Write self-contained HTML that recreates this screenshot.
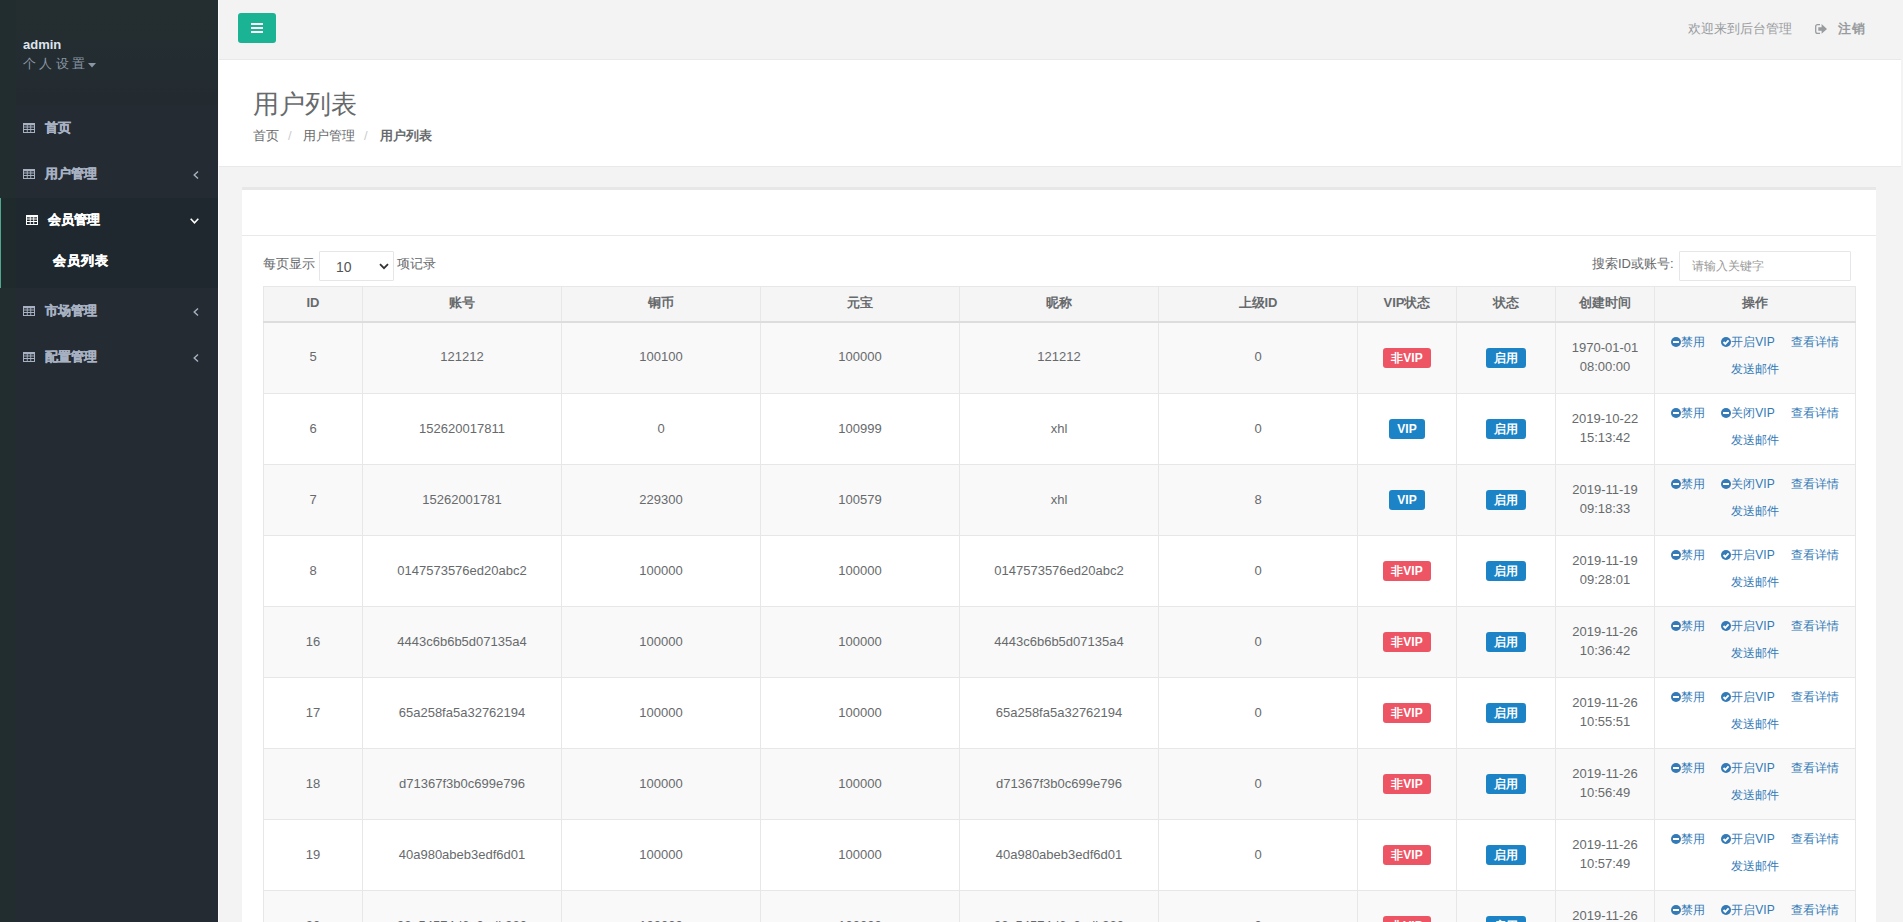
<!DOCTYPE html>
<html><head><meta charset="utf-8">
<style>
*{box-sizing:border-box;margin:0;padding:0}
html,body{width:1903px;height:922px;overflow:hidden}
body{position:relative;background:#f3f3f4;font-family:"Liberation Sans",sans-serif;font-size:13px;color:#676a6c;line-height:1.42857}
.abs{position:absolute;white-space:nowrap}
#side{position:absolute;left:0;top:0;width:218px;height:922px;background:#242b32;z-index:2}
#side .nh{position:absolute;left:0;top:0;width:218px;height:105px;background:linear-gradient(#242e30,#232b31)}
.admin{left:23px;top:36px;color:#dfe4ed;font-weight:bold;line-height:18px}
.prof{left:23px;top:55px;color:#8a96a3;line-height:18px;letter-spacing:3.4px}
.nv{position:absolute;left:0;width:218px;height:46px;color:#a7b1c2;font-weight:bold;-webkit-text-stroke:0.35px currentColor}
.nv .ic{position:absolute;left:23px;top:18px;line-height:0}
.nv .tx{position:absolute;left:45px;top:14px;line-height:18px}
.nv .ch{position:absolute;left:193px;top:20px;line-height:0}
.nv .chd{position:absolute;left:190px;top:20px;line-height:0}
.act1{color:#fff}
.act1 .ic{left:26px;top:17px}
.act1 .tx{left:48px;top:13px}
#active{position:absolute;left:0;top:198px;width:218px;height:90px;background:#1f282e;border-left:1px solid #4fa88c}
.sub{left:53px;top:252px;color:#fff;font-weight:bold;-webkit-text-stroke:0.35px currentColor;line-height:18px;letter-spacing:1px}
#top{position:absolute;left:218px;top:0;width:1683px;height:60px;background:#f3f3f4;border-bottom:1px solid #e7eaec}
#btn{position:absolute;left:238px;top:13px;width:38px;height:30px;background:#1ab394;border-radius:3px}
#btn span{position:absolute;left:13px;width:12px;height:2px;background:#fff}
#btn span:nth-child(1){top:10px}#btn span:nth-child(2){top:14px}#btn span:nth-child(3){top:18px}
.welcome{left:1688px;top:20px;color:#999c9e;line-height:18px}
.logout{left:1838px;top:20px;color:#999c9e;font-weight:bold;line-height:18px;letter-spacing:1px}
#heading{position:absolute;left:218px;top:60px;width:1683px;height:107px;background:#fff;border-bottom:1px solid #e7eaec}
.title{left:253px;top:89px;font-size:26px;line-height:30px;color:#676a6c}
.bc{top:127px;line-height:18px}
.sl{color:#ccc}
.bc b{color:#676a6c}
#ibox{position:absolute;left:242px;top:187px;width:1634px;height:735px;background:#fff;border-top:3px solid #e7e7e7}
#ibox .sep{position:absolute;left:0;top:45px;width:1634px;height:1px;background:#e7eaec}
.inp{position:absolute;height:30px;border:1px solid #e5e6e7;background:#fff;border-radius:1px}
.lenl{left:263px;top:255px;line-height:18px}
.lenr{left:397px;top:255px;line-height:18px}
.sel{left:319px;top:251px;width:75px;color:#555;font-size:14px}
.sel span{position:absolute;left:16px;top:6px;line-height:18px}
.sel svg{position:absolute;left:59px;top:11px}
.srch{left:1592px;top:255px;line-height:18px}
.sinp{left:1679px;top:251px;width:172px}
.sinp span{position:absolute;left:12px;top:5px;font-size:12px;color:#999;line-height:18px}
table{position:absolute;left:263px;top:286px;width:1592px;border-collapse:collapse;table-layout:fixed}
th,td{border:1px solid #e7e7e7;text-align:center;vertical-align:middle;padding:0}
th{height:35px;background:#f5f5f6;font-weight:bold;border-bottom:2px solid #dddddd}
td{height:71px}
tr.odd td{background:#f9f9f9}
.lbl{display:inline-block;height:20px;line-height:20px;padding:0 8px;border-radius:3px;color:#fff;font-size:12px;font-weight:bold}
.red{background:#ed5565}.blue{background:#1c84c6}
td.ac{vertical-align:top}
.ac a{color:#337ab7;text-decoration:none;font-size:12px;margin:0 8px}
.ac .l1{margin-top:5px;line-height:27px}
.ac .l2{line-height:26px}
.i{vertical-align:-1px}
tbody tr:first-child td{height:72px}
</style></head><body>
<div id="side"><div class="nh"></div>
<div class="abs admin">admin</div>
<div class="abs prof">个人设置<svg width="9" height="5" viewBox="0 0 9 5" style="margin-left:-1px;vertical-align:0px"><path d="M0 0H8L4 4.5Z" fill="#8a96a3"/></svg></div>
<div class="abs" style="left:0;top:0;width:16px;height:922px;background:#222d2f"></div><div id="active"></div><div class="abs" style="left:1px;top:198px;width:15px;height:90px;background:#1e2a2b"></div>
<div class="nv" style="top:105px"><span class="ic"><svg width="12" height="10" viewBox="0 0 12 10"><path fill-rule="evenodd" fill="#a7b1c2" d="M0 0H12V10H0Z M1 2.2H3.8V3.6H1Z M4.7 2.2H7.3V3.6H4.7Z M8.2 2.2H11V3.6H8.2Z M1 4.6H3.8V6H1Z M4.7 4.6H7.3V6H4.7Z M8.2 4.6H11V6H8.2Z M1 7H3.8V9H1Z M4.7 7H7.3V9H4.7Z M8.2 7H11V9H8.2Z"/></svg></span><span class="tx">首页</span></div>
<div class="nv" style="top:151px"><span class="ic"><svg width="12" height="10" viewBox="0 0 12 10"><path fill-rule="evenodd" fill="#a7b1c2" d="M0 0H12V10H0Z M1 2.2H3.8V3.6H1Z M4.7 2.2H7.3V3.6H4.7Z M8.2 2.2H11V3.6H8.2Z M1 4.6H3.8V6H1Z M4.7 4.6H7.3V6H4.7Z M8.2 4.6H11V6H8.2Z M1 7H3.8V9H1Z M4.7 7H7.3V9H4.7Z M8.2 7H11V9H8.2Z"/></svg></span><span class="tx">用户管理</span><span class="ch"><svg width="6" height="8" viewBox="0 0 6 8"><path d="M5 0.5 L1.2 4 L5 7.5" stroke="#a7b1c2" stroke-width="1.4" fill="none"/></svg></span></div>
<div class="nv act1" style="top:198px"><span class="ic"><svg width="12" height="10" viewBox="0 0 12 10"><path fill-rule="evenodd" fill="#fff" d="M0 0H12V10H0Z M1 2.2H3.8V3.6H1Z M4.7 2.2H7.3V3.6H4.7Z M8.2 2.2H11V3.6H8.2Z M1 4.6H3.8V6H1Z M4.7 4.6H7.3V6H4.7Z M8.2 4.6H11V6H8.2Z M1 7H3.8V9H1Z M4.7 7H7.3V9H4.7Z M8.2 7H11V9H8.2Z"/></svg></span><span class="tx">会员管理</span><span class="chd"><svg width="9" height="6" viewBox="0 0 9 6"><path d="M0.7 0.8 L4.5 4.8 L8.3 0.8" stroke="#fff" stroke-width="1.6" fill="none"/></svg></span></div>
<div class="nv" style="top:288px"><span class="ic"><svg width="12" height="10" viewBox="0 0 12 10"><path fill-rule="evenodd" fill="#a7b1c2" d="M0 0H12V10H0Z M1 2.2H3.8V3.6H1Z M4.7 2.2H7.3V3.6H4.7Z M8.2 2.2H11V3.6H8.2Z M1 4.6H3.8V6H1Z M4.7 4.6H7.3V6H4.7Z M8.2 4.6H11V6H8.2Z M1 7H3.8V9H1Z M4.7 7H7.3V9H4.7Z M8.2 7H11V9H8.2Z"/></svg></span><span class="tx">市场管理</span><span class="ch"><svg width="6" height="8" viewBox="0 0 6 8"><path d="M5 0.5 L1.2 4 L5 7.5" stroke="#a7b1c2" stroke-width="1.4" fill="none"/></svg></span></div>
<div class="nv" style="top:334px"><span class="ic"><svg width="12" height="10" viewBox="0 0 12 10"><path fill-rule="evenodd" fill="#a7b1c2" d="M0 0H12V10H0Z M1 2.2H3.8V3.6H1Z M4.7 2.2H7.3V3.6H4.7Z M8.2 2.2H11V3.6H8.2Z M1 4.6H3.8V6H1Z M4.7 4.6H7.3V6H4.7Z M8.2 4.6H11V6H8.2Z M1 7H3.8V9H1Z M4.7 7H7.3V9H4.7Z M8.2 7H11V9H8.2Z"/></svg></span><span class="tx">配置管理</span><span class="ch"><svg width="6" height="8" viewBox="0 0 6 8"><path d="M5 0.5 L1.2 4 L5 7.5" stroke="#a7b1c2" stroke-width="1.4" fill="none"/></svg></span></div>
<div class="abs sub">会员列表</div>
</div>
<div class="abs" style="left:218px;top:0;width:1px;height:922px;background:#fbfbfb;z-index:3"></div><div id="top"></div><div id="btn"><span></span><span></span><span></span></div>
<div class="abs welcome">欢迎来到后台管理</div>
<svg class="abs" style="left:1815px;top:24px" width="12" height="10" viewBox="0 0 12 10"><path d="M5 0.7H2.6Q0.7 0.7 0.7 2.6V7.4Q0.7 9.3 2.6 9.3H5" stroke="#999c9e" stroke-width="1.3" fill="none"/><path d="M3.3 3.2H6.6V0L12 4.9 6.6 9.8V6.7H3.3Z" fill="#999c9e"/></svg>
<div class="abs logout">注销</div>
<div id="heading"></div>
<div class="abs title">用户列表</div>
<div class="abs bc" style="left:253px">首页</div><div class="abs bc sl" style="left:288px">/</div><div class="abs bc" style="left:303px">用户管理</div><div class="abs bc sl" style="left:364px">/</div><div class="abs bc" style="left:380px;font-weight:bold">用户列表</div>
<div id="ibox"><div class="sep"></div></div>
<div class="abs lenl">每页显示</div><div class="inp sel"><span>10</span><svg width="10" height="7" viewBox="0 0 10 7"><path d="M1 1.2 L5 5.2 L9 1.2" stroke="#333" stroke-width="1.8" fill="none"/></svg></div><div class="abs lenr">项记录</div>
<div class="abs srch">搜索ID或账号:</div><div class="inp sinp"><span>请输入关键字</span></div>
<table><colgroup><col style="width:99px"><col style="width:199px"><col style="width:199px"><col style="width:199px"><col style="width:199px"><col style="width:199px"><col style="width:99px"><col style="width:99px"><col style="width:99px"><col style="width:201px"></colgroup>
<thead><tr><th>ID</th><th>账号</th><th>铜币</th><th>元宝</th><th>昵称</th><th>上级ID</th><th>VIP状态</th><th>状态</th><th>创建时间</th><th>操作</th></tr></thead>
<tbody>
<tr class="odd"><td>5</td><td>121212</td><td>100100</td><td>100000</td><td>121212</td><td>0</td><td><span class="lbl red">非VIP</span></td><td><span class="lbl blue">启用</span></td><td class="dt">1970-01-01<br>08:00:00</td><td class="ac"><div class="l1"><a><svg class="i" width="10" height="10" viewBox="0 0 10 10"><circle cx="5" cy="5" r="5" fill="#337ab7"/><rect x="2" y="4" width="6" height="2" fill="#fff"/></svg>禁用</a><a><svg class="i" width="10" height="10" viewBox="0 0 10 10"><circle cx="5" cy="5" r="5" fill="#337ab7"/><path d="M2.5 5 L4.3 6.8 L7.6 3.4" stroke="#fff" stroke-width="1.9" fill="none"/></svg>开启VIP</a><a>查看详情</a></div><div class="l2"><a>发送邮件</a></div></td></tr>
<tr><td>6</td><td>152620017811</td><td>0</td><td>100999</td><td>xhl</td><td>0</td><td><span class="lbl blue">VIP</span></td><td><span class="lbl blue">启用</span></td><td class="dt">2019-10-22<br>15:13:42</td><td class="ac"><div class="l1"><a><svg class="i" width="10" height="10" viewBox="0 0 10 10"><circle cx="5" cy="5" r="5" fill="#337ab7"/><rect x="2" y="4" width="6" height="2" fill="#fff"/></svg>禁用</a><a><svg class="i" width="10" height="10" viewBox="0 0 10 10"><circle cx="5" cy="5" r="5" fill="#337ab7"/><rect x="2" y="4" width="6" height="2" fill="#fff"/></svg>关闭VIP</a><a>查看详情</a></div><div class="l2"><a>发送邮件</a></div></td></tr>
<tr class="odd"><td>7</td><td>15262001781</td><td>229300</td><td>100579</td><td>xhl</td><td>8</td><td><span class="lbl blue">VIP</span></td><td><span class="lbl blue">启用</span></td><td class="dt">2019-11-19<br>09:18:33</td><td class="ac"><div class="l1"><a><svg class="i" width="10" height="10" viewBox="0 0 10 10"><circle cx="5" cy="5" r="5" fill="#337ab7"/><rect x="2" y="4" width="6" height="2" fill="#fff"/></svg>禁用</a><a><svg class="i" width="10" height="10" viewBox="0 0 10 10"><circle cx="5" cy="5" r="5" fill="#337ab7"/><rect x="2" y="4" width="6" height="2" fill="#fff"/></svg>关闭VIP</a><a>查看详情</a></div><div class="l2"><a>发送邮件</a></div></td></tr>
<tr><td>8</td><td>0147573576ed20abc2</td><td>100000</td><td>100000</td><td>0147573576ed20abc2</td><td>0</td><td><span class="lbl red">非VIP</span></td><td><span class="lbl blue">启用</span></td><td class="dt">2019-11-19<br>09:28:01</td><td class="ac"><div class="l1"><a><svg class="i" width="10" height="10" viewBox="0 0 10 10"><circle cx="5" cy="5" r="5" fill="#337ab7"/><rect x="2" y="4" width="6" height="2" fill="#fff"/></svg>禁用</a><a><svg class="i" width="10" height="10" viewBox="0 0 10 10"><circle cx="5" cy="5" r="5" fill="#337ab7"/><path d="M2.5 5 L4.3 6.8 L7.6 3.4" stroke="#fff" stroke-width="1.9" fill="none"/></svg>开启VIP</a><a>查看详情</a></div><div class="l2"><a>发送邮件</a></div></td></tr>
<tr class="odd"><td>16</td><td>4443c6b6b5d07135a4</td><td>100000</td><td>100000</td><td>4443c6b6b5d07135a4</td><td>0</td><td><span class="lbl red">非VIP</span></td><td><span class="lbl blue">启用</span></td><td class="dt">2019-11-26<br>10:36:42</td><td class="ac"><div class="l1"><a><svg class="i" width="10" height="10" viewBox="0 0 10 10"><circle cx="5" cy="5" r="5" fill="#337ab7"/><rect x="2" y="4" width="6" height="2" fill="#fff"/></svg>禁用</a><a><svg class="i" width="10" height="10" viewBox="0 0 10 10"><circle cx="5" cy="5" r="5" fill="#337ab7"/><path d="M2.5 5 L4.3 6.8 L7.6 3.4" stroke="#fff" stroke-width="1.9" fill="none"/></svg>开启VIP</a><a>查看详情</a></div><div class="l2"><a>发送邮件</a></div></td></tr>
<tr><td>17</td><td>65a258fa5a32762194</td><td>100000</td><td>100000</td><td>65a258fa5a32762194</td><td>0</td><td><span class="lbl red">非VIP</span></td><td><span class="lbl blue">启用</span></td><td class="dt">2019-11-26<br>10:55:51</td><td class="ac"><div class="l1"><a><svg class="i" width="10" height="10" viewBox="0 0 10 10"><circle cx="5" cy="5" r="5" fill="#337ab7"/><rect x="2" y="4" width="6" height="2" fill="#fff"/></svg>禁用</a><a><svg class="i" width="10" height="10" viewBox="0 0 10 10"><circle cx="5" cy="5" r="5" fill="#337ab7"/><path d="M2.5 5 L4.3 6.8 L7.6 3.4" stroke="#fff" stroke-width="1.9" fill="none"/></svg>开启VIP</a><a>查看详情</a></div><div class="l2"><a>发送邮件</a></div></td></tr>
<tr class="odd"><td>18</td><td>d71367f3b0c699e796</td><td>100000</td><td>100000</td><td>d71367f3b0c699e796</td><td>0</td><td><span class="lbl red">非VIP</span></td><td><span class="lbl blue">启用</span></td><td class="dt">2019-11-26<br>10:56:49</td><td class="ac"><div class="l1"><a><svg class="i" width="10" height="10" viewBox="0 0 10 10"><circle cx="5" cy="5" r="5" fill="#337ab7"/><rect x="2" y="4" width="6" height="2" fill="#fff"/></svg>禁用</a><a><svg class="i" width="10" height="10" viewBox="0 0 10 10"><circle cx="5" cy="5" r="5" fill="#337ab7"/><path d="M2.5 5 L4.3 6.8 L7.6 3.4" stroke="#fff" stroke-width="1.9" fill="none"/></svg>开启VIP</a><a>查看详情</a></div><div class="l2"><a>发送邮件</a></div></td></tr>
<tr><td>19</td><td>40a980abeb3edf6d01</td><td>100000</td><td>100000</td><td>40a980abeb3edf6d01</td><td>0</td><td><span class="lbl red">非VIP</span></td><td><span class="lbl blue">启用</span></td><td class="dt">2019-11-26<br>10:57:49</td><td class="ac"><div class="l1"><a><svg class="i" width="10" height="10" viewBox="0 0 10 10"><circle cx="5" cy="5" r="5" fill="#337ab7"/><rect x="2" y="4" width="6" height="2" fill="#fff"/></svg>禁用</a><a><svg class="i" width="10" height="10" viewBox="0 0 10 10"><circle cx="5" cy="5" r="5" fill="#337ab7"/><path d="M2.5 5 L4.3 6.8 L7.6 3.4" stroke="#fff" stroke-width="1.9" fill="none"/></svg>开启VIP</a><a>查看详情</a></div><div class="l2"><a>发送邮件</a></div></td></tr>
<tr class="odd"><td>20</td><td>92a54574d6a0adb920</td><td>100000</td><td>100000</td><td>92a54574d6a0adb920</td><td>0</td><td><span class="lbl red">非VIP</span></td><td><span class="lbl blue">启用</span></td><td class="dt">2019-11-26<br>10:58:12</td><td class="ac"><div class="l1"><a><svg class="i" width="10" height="10" viewBox="0 0 10 10"><circle cx="5" cy="5" r="5" fill="#337ab7"/><rect x="2" y="4" width="6" height="2" fill="#fff"/></svg>禁用</a><a><svg class="i" width="10" height="10" viewBox="0 0 10 10"><circle cx="5" cy="5" r="5" fill="#337ab7"/><path d="M2.5 5 L4.3 6.8 L7.6 3.4" stroke="#fff" stroke-width="1.9" fill="none"/></svg>开启VIP</a><a>查看详情</a></div><div class="l2"><a>发送邮件</a></div></td></tr>
</tbody></table>
</body></html>
